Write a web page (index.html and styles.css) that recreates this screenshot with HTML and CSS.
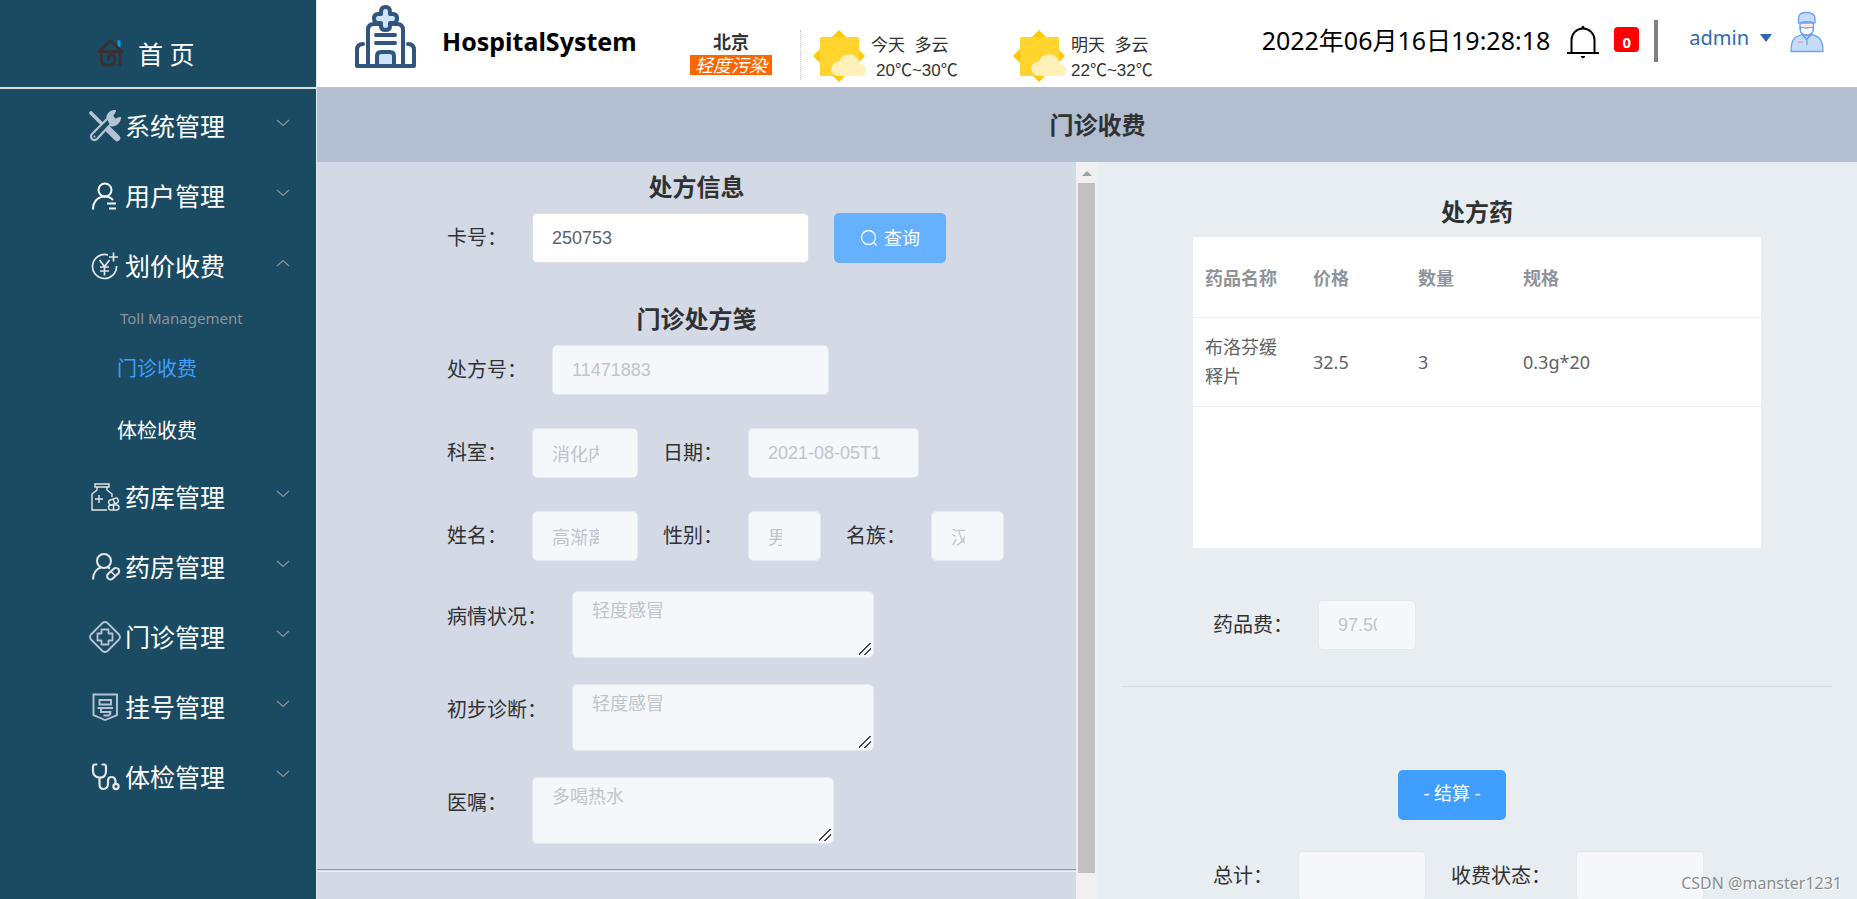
FILE: index.html
```html
<!DOCTYPE html>
<html lang="zh-CN">
<head>
<meta charset="utf-8">
<title>HospitalSystem</title>
<link rel="stylesheet" href="styles.css">
</head>
<body>
<svg class="sprite" aria-hidden="true">
  <symbol id="chevron" viewBox="0 0 14 8"><path d="M1 1l6 5.500l6-5.500" fill="none" stroke="#909399" stroke-width="1.200"/></symbol>
  <symbol id="sun" viewBox="0 0 54 52">
    <path d="M26 0L52 26L26 52L0 26z" fill="#ffc800"/>
    <rect x="7" y="7" width="39" height="39" rx="1.500" fill="#ffd42d"/>
    <path d="M25 46a7 7 0 0 1 1-14.500a10.500 10.500 0 0 1 20.500 2.500a6 6 0 0 1 1 12z" fill="#fff0b8"/>
  </symbol>
</svg>
<div class="app">
  <aside class="sidebar">
    <a class="home" href="#">
      <svg class="home-icon" viewBox="0 0 28 28" fill="none" stroke="#3a2f33" stroke-width="3" stroke-linecap="round" stroke-linejoin="round">
        <path d="M22 1.500v7" stroke="#00a0e9" stroke-linecap="butt"/>
        <path d="M2 12.500L11.500 3.500q2-2 4 0L25 12.500M2 12.500h22M23 12.500v13.500M4.500 13v9q0 4 4 4h4.500q4.500 0 4.500-4.500v-3q0-3-3-3t-3 3v1.500"/>
      </svg>
      <span>首 页</span>
    </a>
    <nav class="menu">
      <button class="menu-item" type="button">
        <svg class="menu-icon" viewBox="0 0 32 32">
          <path d="M2 3l10 10" stroke="#b7c2d5" stroke-width="3.600" stroke-linecap="round"/>
          <path d="M20 20l8 8" stroke="#b7c2d5" stroke-width="6.500" stroke-linecap="round"/>
          <path d="M18 9a8 8 0 0 1 8-8l-3 5l3 4l5-2a8 8 0 0 1-10 7L8 29a3.500 3.500 0 0 1-5-5z" fill="#1a4b63" stroke="#b7c2d5" stroke-width="2.200" stroke-linejoin="round"/>
          <path d="M18 9a8 8 0 0 1 8-8l-4 5l4 5l5-3a8 8 0 0 1-10 7z" fill="#b7c2d5"/>
          <circle cx="5.500" cy="26.500" r="1" fill="#b7c2d5"/>
        </svg>
        <span>系统管理</span><svg class="arrow"><use href="#chevron"/></svg>
      </button>
      <button class="menu-item" type="button">
        <svg class="menu-icon" viewBox="0 0 32 32" fill="none" stroke="#fff" stroke-width="2">
          <circle cx="16" cy="10" r="6.500"/><path d="M4 29.500c0-8 5-13 12-13q5 0 8 3.500M18 23.500h9M20 28.500h7"/>
        </svg>
        <span>用户管理</span><svg class="arrow"><use href="#chevron"/></svg>
      </button>
      <button class="menu-item" type="button" aria-expanded="true">
        <svg class="menu-icon" viewBox="0 0 32 32" fill="none" stroke="#e6e6e6" stroke-width="1.700">
          <path d="M19 5a12 12 0 1 0 8.500 11M24.500 2.500v9M20 7h9M10.500 10l5 6.500l5-6.500M15.500 16.500v9M11 17h9M11 21h9"/>
        </svg>
        <span>划价收费</span><svg class="arrow arrow-up"><use href="#chevron"/></svg>
      </button>
      <div class="submenu">
        <p class="submenu-title">Toll Management</p>
        <a class="submenu-item active" href="#">门诊收费</a>
        <a class="submenu-item" href="#">体检收费</a>
      </div>
      <button class="menu-item" type="button">
        <svg class="menu-icon" viewBox="0 0 32 32" fill="none" stroke="#e6e6e6" stroke-width="1.400">
          <path d="M6 3h14v3H6zM8 6v3l-5 4v16h15M18 6v3l5 4v3M6 18h8M10 14v8"/>
          <rect x="19.500" y="18" width="10" height="5" rx="2.500" transform="rotate(-20 24.500 20.500)"/><path d="M24 18l2 5"/>
          <rect x="19.500" y="24" width="10.500" height="5" rx="2.500"/><path d="M24.500 24v5"/>
        </svg>
        <span>药库管理</span><svg class="arrow"><use href="#chevron"/></svg>
      </button>
      <button class="menu-item" type="button">
        <svg class="menu-icon" viewBox="0 0 32 32" fill="none" stroke="#e6e6e6" stroke-width="2">
          <circle cx="15" cy="10" r="7"/><path d="M4 28.500c0-7 4-11 8-12M19 16.500l2 1"/>
          <rect x="17" y="19.500" width="14" height="6.500" rx="3.200" transform="rotate(-42 24 22.500)"/><path d="M21.500 20l5 5" stroke-width="1.500"/>
        </svg>
        <span>药房管理</span><svg class="arrow"><use href="#chevron"/></svg>
      </button>
      <button class="menu-item" type="button">
        <svg class="menu-icon" viewBox="0 0 32 32" fill="none" stroke="#b7c2d5" stroke-width="1.800" stroke-linejoin="round">
          <path d="M13.500 2q2.500-2 5 0L30 13.500q2 2.500 0 5L18.500 30q-2.500 2-5 0L2 18.500q-2-2.500 0-5z"/>
          <path d="M12.500 8.500h7v4h4v7h-4v4h-7v-4h-4v-7h4z"/>
        </svg>
        <span>门诊管理</span><svg class="arrow"><use href="#chevron"/></svg>
      </button>
      <button class="menu-item" type="button">
        <svg class="menu-icon" viewBox="0 0 32 32" fill="none" stroke="#b7c2d5" stroke-width="1.900">
          <path d="M4.500 3.500h23.500v20.500L16.200 29L4.500 24zM10.500 9h11.500v4.500h-11.500zM8.500 17h15.500M12 17.500v3.500h9.500q0 3.500-3 3.500h-4"/>
        </svg>
        <span>挂号管理</span><svg class="arrow"><use href="#chevron"/></svg>
      </button>
      <button class="menu-item" type="button">
        <svg class="menu-icon" viewBox="0 0 32 32" fill="none" stroke="#e6e6e6" stroke-width="2.200" stroke-linecap="round">
          <path d="M7.500 3.500H6q-2 0-2 2.500v4q0 6 6.500 6.500t6.500-6.500V6q0-2.500-2-2.500h-1.500M10.500 17v6q0 5 4 5t4.500-5v-3q0-4 3.500-4t4 4v2.500"/><circle cx="27" cy="25.500" r="2.600"/>
        </svg>
        <span>体检管理</span><svg class="arrow"><use href="#chevron"/></svg>
      </button>
    </nav>
  </aside>

  <div class="main">
    <header class="topbar">
      <svg class="logo" viewBox="0 0 61 64" fill="none" stroke="#2f5580" stroke-width="4" stroke-linejoin="round" stroke-linecap="round">
        <path d="M13 61V25q0-6 6-6h23q6 0 6 6v36M2 61V45q0-6 6-6M59 61V45q0-6-6-6M2 61h57M21 30h19M21 38h19"/>
        <path d="M22 61V51q0-4 4-4h9q4 0 4 4v10z" fill="#cfe4f8"/>
        <path d="M26 9V7q0-5 4.500-5T35 7v2h3q4 0 4 4.500T38 18h-3v3q0 4-4.500 4T26 21v-3h-3q-4 0-4-4.500T23 9z" fill="#cfe4f8"/>
      </svg>
      <h1 class="brand">HospitalSystem</h1>
      <section class="weather">
        <div class="city"><strong>北京</strong><em>轻度污染</em></div>
        <div class="day day-today"><svg class="sun"><use href="#sun"/></svg><p>今天&nbsp; 多云<br><span>20℃~30℃</span></p></div>
        <div class="day"><svg class="sun"><use href="#sun"/></svg><p>明天&nbsp; 多云<br>22℃~32℃</p></div>
      </section>
      <div class="status">
        <time class="clock">2022年06月16日19:28:18</time>
        <svg class="bell" viewBox="0 0 34 34" fill="none" stroke="#000" stroke-width="2"><path d="M1 28h32M5.500 28V15a11.500 11.500 0 0 1 23 0v13M17 1v3"/><path d="M15 31.500h4l-2 1.500z" fill="#000" stroke-width="1"/><circle cx="17" cy="2.500" r="1.500" fill="#000" stroke="none"/></svg>
        <span class="count">0</span>
        <i class="bar"></i>
        <button class="user" type="button">admin <i class="caret"></i></button>
        <svg class="avatar" viewBox="0 0 34 42" fill="#c5dcfb" stroke="#6ea1f3" stroke-width="1.300" stroke-linejoin="round">
          <path d="M1 40.500c0-13 4-15 11-17l4.500 5l5-5c8 2 11.500 5 11.500 17z"/>
          <path d="M10 12v6q1 7 6.500 7t7-7v-6z" fill="#fbe9e4"/>
          <path d="M10.500 16q6 2 12.500 0v4q-2 4-6.500 4t-6-4z" fill="#fff"/>
          <path d="M8.500 12V7q0-5.500 8-5.500T25 7v5q-8-2.500-16.500 0z"/>
          <path d="M13 24l3.500 4l4-4M17 28v6" fill="none"/><path d="M8 31h5" stroke="#f0a0a8"/>
        </svg>
      </div>
    </header>
    <h2 class="page-title">门诊收费</h2>

    <div class="content">
      <form class="panel-left">
        <h3 class="heading">处方信息</h3>
        <div class="row row-query">
          <label for="card">卡号：</label><input id="card" class="w-long active-input" value="250753">
          <button class="btn btn-query" type="button"><svg viewBox="0 0 18 18" fill="none" stroke="#fff" stroke-width="1.300"><circle cx="8.500" cy="8.500" r="7"/><path d="M13.500 13.500l3 3"/></svg>查询</button>
        </div>
        <h3 class="heading">门诊处方笺</h3>
        <div class="rows">
          <div class="row"><label for="rx">处方号：</label><input id="rx" class="w-long" value="11471883" disabled></div>
          <div class="row">
            <label for="dept">科室：</label><input id="dept" class="w-mid" value="消化内科" disabled>
            <label for="date">日期：</label><input id="date" class="w-date" value="2021-08-05T16:00:00" disabled>
          </div>
          <div class="row">
            <label for="name">姓名：</label><input id="name" class="w-mid" value="高渐离" disabled>
            <label for="sex">性别：</label><input id="sex" class="w-short" value="男" disabled>
            <label for="nation">名族：</label><input id="nation" class="w-short" value="汉族" disabled>
          </div>
        </div>
        <div class="areas">
          <div class="row"><label for="state">病情状况：</label><textarea id="state" disabled>轻度感冒</textarea></div>
          <div class="row"><label for="diag">初步诊断：</label><textarea id="diag" disabled>轻度感冒</textarea></div>
          <div class="row"><label for="advice">医嘱：</label><textarea id="advice" disabled>多喝热水</textarea></div>
        </div>
        <hr class="rule">
      </form>
      <div class="scrollbar"><i class="scroll-up"></i><i class="scroll-thumb"></i></div>
      <section class="panel-right">
        <h3 class="heading">处方药</h3>
        <div class="table-box">
          <table class="drugs">
            <colgroup><col class="col-name"><col class="col-num"><col class="col-num"><col></colgroup>
            <thead><tr><th>药品名称</th><th>价格</th><th>数量</th><th>规格</th></tr></thead>
            <tbody><tr><td>布洛芬缓释片</td><td>32.5</td><td>3</td><td>0.3g*20</td></tr></tbody>
          </table>
        </div>
        <div class="row"><label for="fee">药品费：</label><input id="fee" class="w-fee" value="97.50" disabled></div>
        <hr class="divider">
        <div class="settle"><button class="btn btn-settle" type="button">- 结算 -</button></div>
        <div class="row">
          <label for="total">总计：</label><input id="total" class="w-total" disabled>
          <label for="paid">收费状态：</label><input id="paid" class="w-total" disabled>
        </div>
      </section>
    </div>
  </div>
  <span class="watermark">CSDN @manster1231</span>
</div>
</body>
</html>
```
FILE: styles.css
```css
* { box-sizing: border-box; }
body, h1, h2, h3, p { margin: 0; }
body {
  font-family: "Noto Sans", "Noto Sans CJK SC", sans-serif;
  font-size: 18px;
  color: #303133;
}
button { font: inherit; border: 0; background: none; cursor: pointer; }
a { text-decoration: none; }
.sprite { display: none; }
.app { position: relative; display: flex; height: 100vh; overflow: hidden; }

/* Sidebar */
.sidebar {
  flex: 0 0 317px;
  background: #1a4b63;
  border-right: 1px solid #e6e6e6;
  color: #fff;
  font-size: 25px;
}
.home {
  display: flex;
  align-items: center;
  gap: 13px;
  height: 89px;
  padding: 18px 0 0 97px;
  color: #fff;
  border-bottom: 2px solid #d9dde0;
}
.home-icon { width: 28px; height: 28px; }
.menu { padding-top: 2px; }
.menu-item {
  display: flex;
  align-items: center;
  gap: 4px;
  width: 100%;
  height: 70px;
  padding: 0 26px 0 89px;
  color: #fff;
}
.menu-item span { padding-bottom: 2px; }
.menu-icon { width: 32px; height: 32px; }
.arrow { width: 14px; height: 8px; margin: 0 0 6px auto; }
.arrow-up { transform: scaleY(-1); }
.submenu { padding-left: 117px; font-size: 20px; }
.submenu-title { line-height: 34px; padding: 0 0 2px 3px; font-size: 15px; color: #909399; }
.submenu-item { display: block; line-height: 62px; color: #fff; }
.submenu-item.active { line-height: 63px; color: #409eff; }

/* Top bar */
.main { flex: 1; min-width: 0; display: flex; flex-direction: column; }
.topbar { display: flex; align-items: flex-start; height: 87px; padding-left: 38px; background: #fff; }
.logo { width: 61px; height: 64px; margin-top: 5px; }
.brand { margin: 23px 0 0 26px; width: 248px; font-size: 25px; line-height: 36px; color: #000; }
.weather { display: flex; padding-top: 30px; line-height: 25px; color: #333; }
.city {
  display: flex;
  flex-direction: column;
  align-items: center;
  width: 111px;
  padding-right: 28px;
  height: 50px;
  border-right: 1px dotted #ccc;
}
.city em { padding: 0 5px; background: #ff6600; color: #fff; line-height: 20px; }
.day { display: flex; gap: 4px; width: 200px; padding-left: 12px; }
.day p { font-family: "Liberation Sans", "Noto Sans CJK SC", sans-serif; font-size: 17px; padding-top: 3px; }
.day-today span { padding-left: 5px; }
.sun { width: 54px; height: 52px; }
.status { display: flex; align-items: flex-start; margin-left: auto; padding-right: 33px; }
.clock { margin-top: 22px; font-size: 25px; line-height: 36px; color: #000; }
.bell { width: 34px; height: 34px; margin: 25px 0 0 16px; }
.count {
  width: 25px;
  height: 25px;
  margin: 27px 0 0 14px;
  border-radius: 4px;
  background: #f00;
  color: #fff;
  font-size: 15px;
  font-weight: 700;
  line-height: 30px;
  text-align: center;
}
.bar { width: 4px; height: 42px; margin: 20px 0 0 15px; background: #808080; }
.user { display: flex; align-items: center; gap: 11px; margin: 22px 0 0 31px; padding: 0; font-size: 20px; line-height: 32px; color: #2f67b5; }
.caret { border: 6px solid transparent; border-top: 8px solid #2f67b5; border-bottom: 0; }
.avatar { width: 34px; height: 42px; margin: 11px 0 0 18px; }
.page-title { background: #b3bfd1; font-size: 24px; line-height: 75px; text-align: center; padding-left: 21px; }

/* Content */
.content { flex: 1; min-height: 0; display: grid; grid-template-columns: 759fr 21px 760fr; }
.heading { font-size: 24px; line-height: 36px; text-align: center; }
.panel-left { background: #d3dae6; padding-top: 7px; overflow: hidden; }
.row { display: flex; gap: 25px; font-size: 20px; line-height: 50px; }
.row label { white-space: nowrap; }
.panel-left .row { padding-left: 130px; }
.panel-left .row-query { padding-top: 8px; padding-bottom: 38px; }
.rows { display: flex; flex-direction: column; gap: 33px; padding: 8px 0 30px; }
.areas { display: flex; flex-direction: column; gap: 26px; padding-bottom: 25px; line-height: 52px; }
.areas .row { line-height: 52px; }
input, textarea {
  flex: none;
  height: 50px;
  padding: 0 38px 0 19px;
  border: 1px solid #e4e7ed;
  border-radius: 5px;
  background: #f5f7fa;
  color: #c0c4cc;
  font-family: "Liberation Sans", "Noto Sans CJK SC", sans-serif;
  font-size: 18px;
}
.active-input { border-color: #dcdfe6; background: #fff; color: #606266; }
textarea { width: 302px; height: 67px; padding: 6px 19px; line-height: 26px; resize: vertical; }
textarea::-webkit-resizer {
  background: linear-gradient(135deg, transparent 45%, #444 45%, #444 54%, transparent 54%, transparent 70%, #444 70%, #444 79%, transparent 79%) 1px 1px / 12px 12px no-repeat;
}
.w-long { width: 277px; }
.w-mid { width: 106px; }
.w-date { width: 171px; }
.w-short { width: 73px; }
.w-fee { width: 98px; }
.w-total { width: 128px; }
.btn { height: 50px; border-radius: 5px; color: #fff; font-size: 18px; line-height: 24px; padding: 0 26px; }
.btn-query { display: flex; align-items: center; gap: 6px; background: #66b1ff; }
.btn-query svg { width: 18px; height: 18px; }
.rule { margin: 0; border: 0; border-top: 1px solid #8f98a5; border-bottom: 1px solid #eef1f5; height: 3px; }
.scrollbar { display: flex; flex-direction: column; align-items: center; background: #f0f0f0; }
.scroll-up { margin: 9px 0 7px; border: 5px solid transparent; border-top: 0; border-bottom-color: #a0a0a0; }
.scroll-thumb { width: 17px; flex: 1; margin-bottom: 26px; background: #c1c1c1; }

.panel-right { background: #e8edf1; padding-top: 32px; overflow: hidden; }
.table-box { width: 568px; height: 311px; margin: 7px auto 52px; background: #fff; }
.drugs { width: 100%; table-layout: fixed; border-collapse: collapse; text-align: left; color: #606266; }
.drugs th, .drugs td { padding: 15px 12px; border-bottom: 1px solid #ebeef5; line-height: 29px; }
.drugs th { padding: 27px 12px 24px; color: #909399; }
.col-name { width: 108px; }
.col-num { width: 105px; }
.panel-right .row { padding-left: 116px; }
.divider { margin: 36px 25px 83px; border: 0; border-top: 1px solid #dcdfe6; }
.settle { padding: 0 50px 31px 0; text-align: center; line-height: 50px; }
.btn-settle { display: inline-block; vertical-align: top; padding-bottom: 4px; background: #409eff; }

.watermark {
  position: absolute;
  right: 15px;
  bottom: 4px;
  font-size: 16px;
  line-height: 24px;
  color: #8a8d90;
  text-shadow: 1px 1px 0 #fff;
}
```
